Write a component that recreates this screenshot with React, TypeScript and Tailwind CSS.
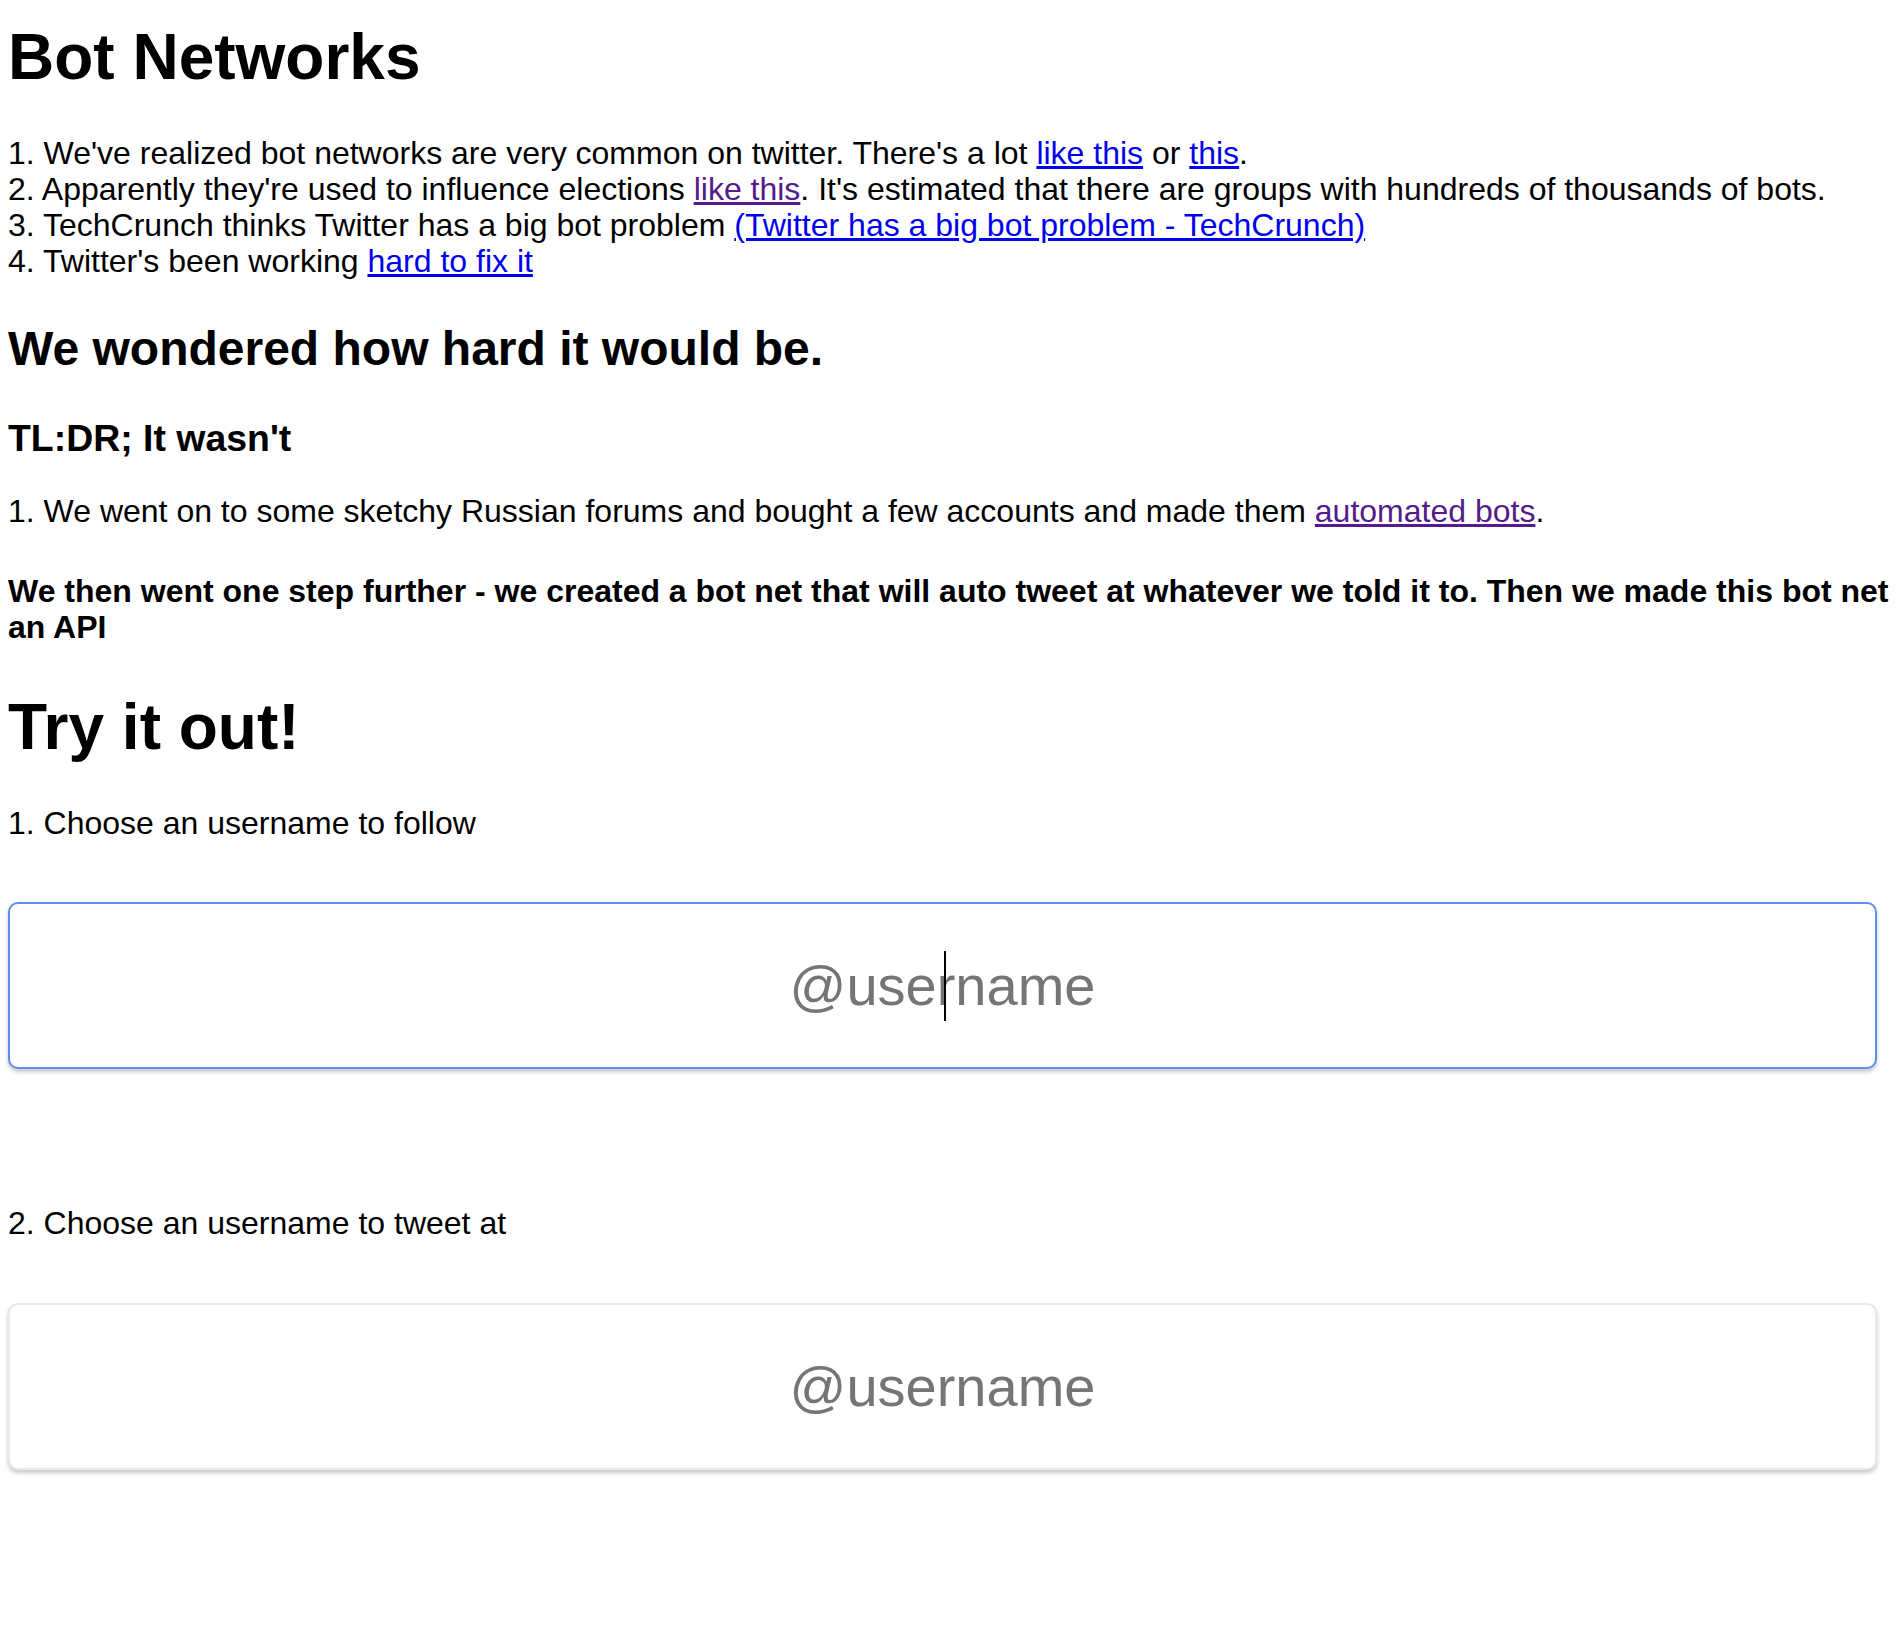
const link = "text-[#0000ee] underline";
const visited = "text-[#551a8b] underline";

interface UsernameInputProps {
  focused?: boolean;
}

const UsernameInput: React.FC<UsernameInputProps> = ({ focused }) => {
  return (
    <div className="relative mr-[19px]">
      <input
        type="text"
        placeholder="@username"
        className={
          focused
            ? "block w-full h-[167px] rounded-[10px] border-2 border-[#5e8ef0] bg-white text-center text-[56px] text-black placeholder:text-[#757575] outline-none shadow-[0_3px_4px_rgba(0,0,0,0.22)]"
            : "block w-full h-[167px] rounded-[10px] border-2 border-[#e9e9e9] bg-white text-center text-[56px] text-black placeholder:text-[#757575] outline-none shadow-[0_3px_4px_rgba(0,0,0,0.22)]"
        }
      />
      {focused && (
        <span className="pointer-events-none absolute left-[936px] top-1/2 h-[70px] w-[2px] -translate-y-1/2 bg-black" />
      )}
    </div>
  );
};

export default function App() {
  return (
    <div className="min-h-[1652px] bg-white px-2 pt-[20px] text-black font-['Helvetica','Liberation_Sans',Arial,sans-serif]">
      <h1 className="text-[64px] font-bold leading-[74px]">Bot Networks</h1>

      <div className="mt-[41px] text-[32px] leading-[36px]">
        <div>
          1. We've realized bot networks are very common on twitter. There's a lot{" "}
          <a className={link} href="#">like this</a> or{" "}
          <a className={link} href="#">this</a>.
        </div>
        <div>
          2. Apparently they're used to influence elections{" "}
          <a className={visited} href="#">like this</a>. It's estimated that there are groups
          with hundreds of thousands of bots.
        </div>
        <div>
          3. TechCrunch thinks Twitter has a big bot problem{" "}
          <a className={link} href="#">(Twitter has a big bot problem - TechCrunch)</a>
        </div>
        <div>
          4. Twitter's been working <a className={link} href="#">hard to fix it</a>
        </div>
      </div>

      <h2 className="mt-[42px] text-[48px] font-bold leading-[55px]">
        We wondered how hard it would be.
      </h2>

      <h3 className="mt-[41px] text-[37.44px] font-bold leading-[43px]">TL:DR; It wasn't</h3>

      <p className="mt-[33px] text-[32px] leading-[36px]">
        1. We went on to some sketchy Russian forums and bought a few accounts and made them{" "}
        <a className={visited} href="#">automated bots</a>.
      </p>

      <h4 className="mt-[44px] text-[32px] font-bold leading-[36px]">
        We then went one step further - we created a bot net that will auto tweet at whatever we
        told it to. Then we made this bot net an API
      </h4>

      <h1 className="mt-[45px] text-[64px] font-bold leading-[74px]">Try it out!</h1>

      <p className="mt-[41px] text-[32px] leading-[36px]">1. Choose an username to follow</p>

      <div className="mt-[61px]">
        <UsernameInput focused />
      </div>

      <p className="mt-[136px] text-[32px] leading-[36px]">2. Choose an username to tweet at</p>

      <div className="mt-[62px]">
        <UsernameInput />
      </div>
    </div>
  );
}
